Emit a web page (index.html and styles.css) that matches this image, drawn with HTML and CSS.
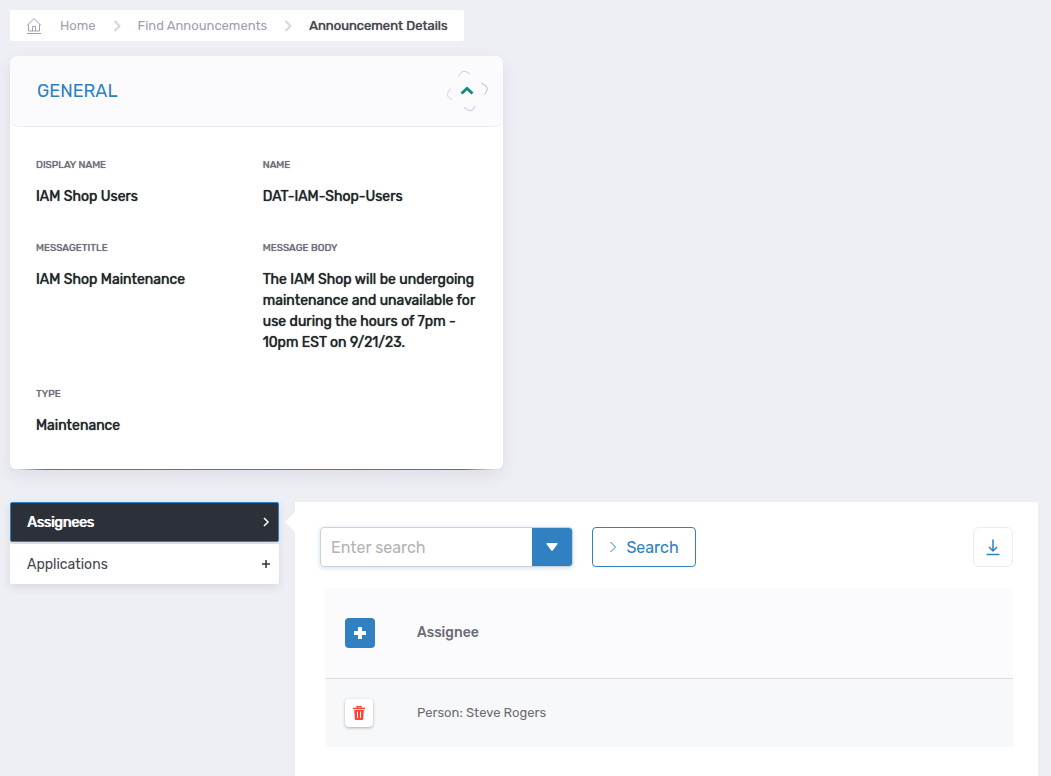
FILE: index.html
```
<!DOCTYPE html>
<html lang="en">
<head>
    <meta charset="UTF-8">
    <meta name="viewport" content="width=device-width, initial-scale=1.0">
    <title>Announcement Details</title>
    <link rel="stylesheet" href="styles.css">
</head>
<body>
    <nav class="breadcrumb" aria-label="Breadcrumb">
        <svg class="home" width="16" height="18" viewBox="0 0 16 18"><path d="M1 8.500 8 1.500l7 7M2.500 7.500v6.500h11V7.500M6.500 14V9.500h3V14M1 16.500h14"/></svg>
        <a href="#">Home</a>
        <svg class="sep" width="8" height="12" viewBox="0 0 8 12"><path d="M1.500 1l5 5-5 5"/></svg>
        <a href="#">Find Announcements</a>
        <svg class="sep" width="8" height="12" viewBox="0 0 8 12"><path d="M1.500 1l5 5-5 5"/></svg>
        <span class="current">Announcement Details</span>
    </nav>

    <section class="card">
        <header class="card_head">
            <h2>GENERAL</h2>
            <button class="collapse" type="button" aria-label="Collapse">
                <svg width="42" height="42" viewBox="0 0 42 42">
                    <path class="arc" stroke="#d6c3ec" d="M12.500 6.500l2.500-4q3-2.500 6-.5l3 2"/>
                    <path class="arc" stroke="#bdb0e8" d="M35.500 13l4.500 3q2.500 2.500.5 5.500l-2 3"/>
                    <path class="arc" stroke="#d0bdf0" d="M18 37.500l4 2.500q3 1.500 5-.5l2-3.500"/>
                    <path class="arc" stroke="#e4c8ee" d="M4.500 18.500l-2.500 4q-1.500 3 .5 5l3.500 2.500"/>
                    <path class="up" d="M15.500 23.500l5.500-5 5.500 5"/>
                </svg>
            </button>
        </header>
        <dl class="fields">
            <div><dt>DISPLAY NAME</dt><dd>IAM Shop Users</dd></div>
            <div><dt>NAME</dt><dd>DAT-IAM-Shop-Users</dd></div>
            <div><dt>MESSAGETITLE</dt><dd>IAM Shop Maintenance</dd></div>
            <div><dt>MESSAGE BODY</dt><dd>The IAM Shop will be undergoing maintenance and unavailable for use during the hours of 7pm - 10pm EST on 9/21/23.</dd></div>
            <div><dt>TYPE</dt><dd>Maintenance</dd></div>
        </dl>
    </section>

    <div class="details">
        <div class="tabs">
            <button class="tab active" type="button">Assignees
                <svg width="8" height="10" viewBox="0 0 8 10"><path d="M2 1l4 4-4 4"/></svg>
            </button>
            <button class="tab" type="button">Applications
                <svg width="10" height="10" viewBox="0 0 10 10"><path d="M5 1v8M1 5h8"/></svg>
            </button>
        </div>

        <main class="panel">
            <form class="toolbar">
                <div class="search_box">
                    <input type="text" placeholder="Enter search" aria-label="Enter search">
                    <button type="button" aria-label="Search options">
                        <svg width="12" height="8" viewBox="0 0 12 8"><path d="M1 0h10q1 0 .5 1L7 7.200q-1 1-2 0L.5 1Q0 0 1 0z" fill="#fff"/></svg>
                    </button>
                </div>
                <button class="search_btn" type="button">
                    <svg width="8" height="12" viewBox="0 0 8 12"><path d="M1.500 1l5 5-5 5"/></svg>
                    Search
                </button>
                <button class="download" type="button" aria-label="Download">
                    <svg width="14" height="17" viewBox="0 0 14 17"><path d="M7 .5v11M3 8l4 4 4-4M.5 15.500h13"/></svg>
                </button>
            </form>

            <table class="list">
                <thead>
                    <tr>
                        <th class="action">
                            <button class="add" type="button" aria-label="Add assignee">
                                <svg width="12" height="12" viewBox="0 0 12 12"><path d="M6 0v12M0 6h12" stroke="#fff" stroke-width="4"/></svg>
                            </button>
                        </th>
                        <th>Assignee</th>
                    </tr>
                </thead>
                <tbody>
                    <tr>
                        <td class="action">
                            <button class="delete" type="button" aria-label="Delete">
                                <svg width="12" height="14" viewBox="0 0 12 14">
                                    <path d="M4 2V.7h4V2M0 2.500h12" fill="none" stroke="#ff4234" stroke-width="1.300"/>
                                    <path d="M1.200 4h9.600l-.6 8.800q-.1 1.200-1.200 1.200H3q-1.100 0-1.200-1.200z" fill="#ff4234"/>
                                    <path d="M4.500 5.500v6.500M7.500 5.500v6.500" stroke="#fff"/>
                                </svg>
                            </button>
                        </td>
                        <td>Person: Steve Rogers</td>
                    </tr>
                </tbody>
            </table>
        </main>
    </div>
</body>
</html>
```
FILE: styles.css
```
*{box-sizing: border-box;}
body{margin: 0;padding: 10px 13px 0 10px;min-height: 100vh;display: flex;flex-direction: column;background: #eeeff4;
font: 14px/21px Rubik, Roboto, sans-serif;color: #212529;}
button,input{font: inherit;margin: 0;padding: 0;border: 0;background: none;}
button{cursor: pointer;display: flex;align-items: center;justify-content: center;}
svg{display: block;flex: none;fill: none;}

.breadcrumb{align-self: flex-start;display: flex;align-items: center;height: 31px;padding: 0 16px;background: #fff;border-radius: 2px;
font-size: 13px;}
.breadcrumb a{color: #a0a0ae;text-decoration: none;}
.breadcrumb .home{margin-right: 18px;stroke: #a0a0b0;}
.breadcrumb .sep{margin: 0 17px;stroke: #d5d5de;stroke-width: 2;}
.breadcrumb .current{color: #464650;text-shadow: 0 0 1px currentColor;}

.card{width: 48%;margin-top: 15px;background: #fff;border-radius: 8px;box-shadow: 0 6px 16px rgba(60,60,90,.09);}
.card_head{display: flex;align-items: center;justify-content: space-between;height: 71px;padding: 0 15px 0 27px;
background: #fbfbfd;border-bottom: 1px solid #ebedf2;border-radius: 8px;}
.card_head h2{margin: 0;font-size: 18px;font-weight: 400;color: #3180c2;}
.arc{stroke-width: 1;}
.up{stroke: #158a80;stroke-width: 3;}

.fields{display: grid;grid-template-columns: 1fr 1fr;row-gap: 33px;margin: 0;padding: 30px 14px 33px 26px;}
.fields dt{margin-bottom: 13px;font-size: 10px;line-height: 16px;color: #6c6c78;text-shadow: 0 0 1px currentColor;}
.fields dd{margin: 0;font-size: 14px;text-shadow: 0 0 1px currentColor;}
.card::after{content: "";display: block;height: 1px;
background: linear-gradient(90deg, transparent, #1a9b85 7%, #1c9098 50%, #3a7ab8 92%, transparent);}

.details{flex: 1;display: flex;gap: 16px;margin-top: 32px;}
.tabs{flex: none;width: 269px;}
.tab{width: 100%;height: 40px;margin-bottom: 2px;padding: 0 8px 0 17px;justify-content: space-between;background: #fff;
border-radius: 2px;color: #46464e;box-shadow: 0 3px 8px rgba(60,60,90,.12);}
.tab svg{stroke: #333;stroke-width: 1.5;}
.tab.active{padding: 0 8px 0 16px;background: #2c3039;border: 1px solid #3180c2;color: #fff;text-shadow: 1px 0 0 currentColor;}
.tab.active svg{stroke: #fff;}

.panel{position: relative;flex: 1;padding: 25px;background: #fff;}
.panel::before{content: "";position: absolute;left: -10px;top: 10px;border: 10px solid transparent;border-left: 0;border-right-color: #fff;}
.toolbar{display: flex;align-items: center;gap: 19px;}
.search_box{display: flex;width: 253px;height: 40px;border: 1px solid #cfd1da;border-radius: 4px;overflow: hidden;
box-shadow: 0 1px 4px rgba(49,128,194,.25);}
.search_box input{flex: 1;min-width: 0;padding: 0 10px;font-size: 16px;}
.search_box input::placeholder{color: #b3b3b3;opacity: 1;}
.search_box button{width: 40px;background: #3180c2;}
.search_btn{width: 104px;height: 40px;gap: 9px;border: 1px solid #3180c2;border-radius: 4px;color: #3180c2;font-size: 16px;}
.search_btn svg,.download svg{stroke: #3180c2;}
.download{width: 40px;height: 40px;margin-left: auto;border: 1px solid #ececf0;border-radius: 6px;}
.download svg{stroke-width: 1.5;}

.list{width: calc(100% - 5px);margin: 21px 0 0 5px;border-collapse: collapse;text-align: left;}
.list th{height: 90px;padding: 0;background: #fbfbfd;border-bottom: 1px solid #dcdde2;font-weight: 500;font-size: 14px;color: #6c6c74;}
.list td{height: 69px;padding: 0;background: #f7f8fa;font-size: 13px;color: #6c6c74;}
.list .action{width: 92px;padding-left: 20px;}
.add{width: 30px;height: 30px;background: #3180c2;border-radius: 4px;}
.delete{width: 28px;height: 28px;background: #fff;border-radius: 4px;box-shadow: 0 1px 3px rgba(0,0,0,.3);}
```
